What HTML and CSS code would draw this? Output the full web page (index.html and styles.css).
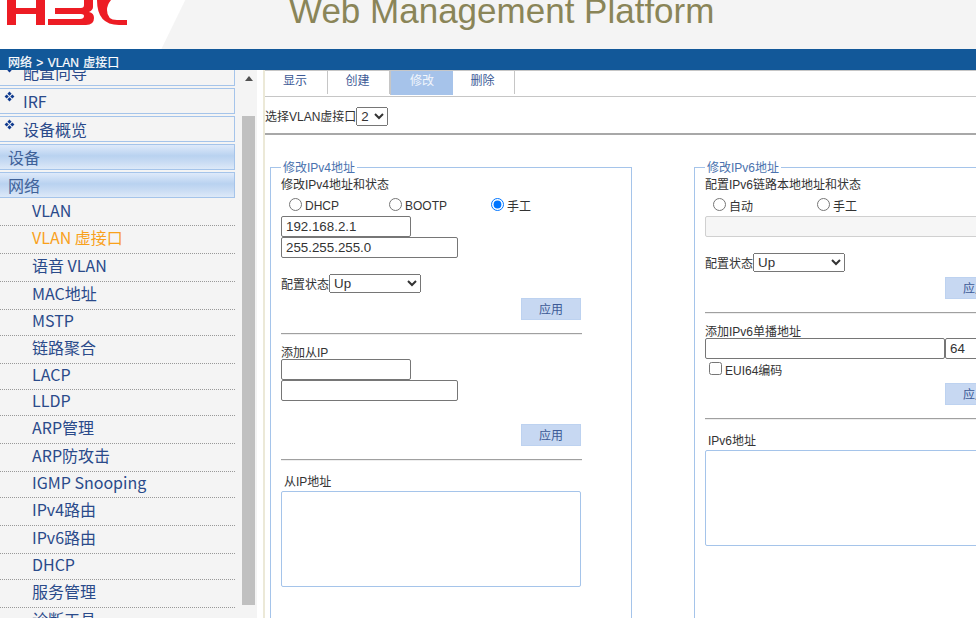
FILE: index.html
```html
<!DOCTYPE html>
<html lang="zh">
<head>
<meta charset="utf-8">
<title>Web Management Platform</title>
<link rel="stylesheet" href="styles.css">
</head>
<body>
<div class="page">
  <header class="header">
    <svg class="logo" width="122" height="25" viewBox="0 0 122 25" aria-label="H3C">
      <g fill="#ed1c24">
        <path d="M0 0h9v8h20V0h9v25h-9V14H9v11H0z"/>
        <path d="M41 25v-6h32q4 0 4-3q0-2-3-2H48V8h26q3 0 3-3V0h9v7q0 3-4 5q5 1 5 6q0 7-8 7z"/>
        <path d="M90 0q0 25 22 25h8v-5h-10q-10 0-10-10q0-5 4-10z"/>
      </g>
    </svg>
    <div class="title">Web Management Platform</div>
  </header>
  <div class="crumb">网络 &gt; VLAN 虚接口</div>
  <div class="main">
    <aside class="side">
      <nav class="menu">
        <div class="box first"><span class="dia"></span>配置向导</div>
        <div class="box"><span class="dia"></span>IRF</div>
        <div class="box"><span class="dia"></span>设备概览</div>
        <div class="head">设备</div>
        <div class="head">网络</div>
        <div class="row">VLAN</div>
        <div class="row tall cur">VLAN 虚接口</div>
        <div class="row tall">语音 VLAN</div>
        <div class="row tall">MAC地址</div>
        <div class="row">MSTP</div>
        <div class="row tall">链路聚合</div>
        <div class="row">LACP</div>
        <div class="row">LLDP</div>
        <div class="row tall">ARP管理</div>
        <div class="row tall">ARP防攻击</div>
        <div class="row">IGMP Snooping</div>
        <div class="row tall">IPv4路由</div>
        <div class="row tall">IPv6路由</div>
        <div class="row">DHCP</div>
        <div class="row tall">服务管理</div>
        <div class="row tall">诊断工具</div>
      </nav>
      <div class="track"><span class="arrow"></span><span class="thumb"></span></div>
    </aside>
    <main class="content">
      <div class="tabs">
        <a class="tab">显示</a>
        <a class="tab">创建</a>
        <a class="tab on">修改</a>
        <a class="tab">删除</a>
      </div>
      <div class="pick"><span class="pick-text">选择VLAN虚接口</span><select class="sel-small"><option>2</option></select></div>
      <div class="panes">
        <fieldset class="pane">
          <legend>修改IPv4地址</legend>
          <div class="lab">修改IPv4地址和状态</div>
          <div class="opts">
            <label class="opt"><input type="radio" name="v4">DHCP</label>
            <label class="opt"><input type="radio" name="v4">BOOTP</label>
            <label class="opt"><input type="radio" name="v4" checked>手工</label>
          </div>
          <input class="ip" type="text" value="192.168.2.1">
          <input class="mask" type="text" value="255.255.255.0">
          <div class="state">配置状态<select class="sel"><option>Up</option></select></div>
          <button class="apply">应用</button>
          <div class="rule"></div>
          <div class="lab sub">添加从IP</div>
          <input class="ip" type="text">
          <input class="mask" type="text">
          <button class="apply far">应用</button>
          <div class="rule"></div>
          <div class="lab list-lab">从IP地址</div>
          <div class="list"></div>
        </fieldset>
        <fieldset class="pane">
          <legend>修改IPv6地址</legend>
          <div class="lab">配置IPv6链路本地地址和状态</div>
          <div class="opts wide">
            <label class="opt"><input type="radio" name="v6">自动</label>
            <label class="opt"><input type="radio" name="v6">手工</label>
          </div>
          <input class="off" type="text" disabled>
          <div class="state">配置状态<select class="sel"><option>Up</option></select></div>
          <button class="apply">应用</button>
          <div class="rule"></div>
          <div class="lab sub">添加IPv6单播地址</div>
          <div class="addr"><input class="v6" type="text"><input class="len" type="text" value="64"></div>
          <label class="eui"><input type="checkbox">EUI64编码</label>
          <button class="apply near">应用</button>
          <div class="rule"></div>
          <div class="lab list-lab">IPv6地址</div>
          <div class="list"></div>
        </fieldset>
      </div>
    </main>
  </div>
</div>
</body>
</html>
```
FILE: styles.css
```css
* { box-sizing: border-box; }
html, body { margin: 0; height: 100%; }
body { background: #fff; overflow: hidden; font: 12px "Liberation Sans", "Noto Sans CJK SC", sans-serif; color: #333; }
.page { width: 976px; height: 618px; overflow: hidden; display: flex; flex-direction: column; }

.header { height: 49px; flex: none; display: flex; background: linear-gradient(116deg, #fff 0, #fff 166px, #f4f4f4 167px); overflow: hidden; }
.logo { flex: none; margin-left: 7px; }
.title { margin-left: 160px; margin-top: -11px; font: 35px/44px "Liberation Sans", sans-serif; color: #8a8558; white-space: nowrap; }

.crumb { height: 21px; flex: none; background: #125899; color: #fff; padding: 6px 0 0 8px; line-height: 16px; font-size: 12px; word-spacing: 1px; -webkit-text-stroke: 0.2px #fff; }

.main { flex: 1; min-height: 0; display: flex; }
.side { width: 257px; flex: none; background: #f4f4f4; display: flex; overflow: hidden; }
.menu { width: 235px; flex: none; margin-top: -10px; font: 16px "Noto Sans CJK SC", sans-serif; color: #2a4a8a; }
.box, .head { height: 26px; margin-bottom: 2px; border: 1px solid #a5c4ea; border-width: 1px 1px 1px 0; }
.box { position: relative; padding-left: 23px; line-height: 24px; background: #f4f4f4; }
.box.first { border-top: 0; }
.dia { position: absolute; left: 5.5px; top: 3.5px; width: 7px; height: 7px; transform: rotate(45deg); background:
  linear-gradient(#0f3a8f, #0f3a8f) 0 0/3px 3px no-repeat,
  linear-gradient(#0f3a8f, #0f3a8f) 4px 0/3px 3px no-repeat,
  linear-gradient(#0f3a8f, #0f3a8f) 0 4px/3px 3px no-repeat,
  linear-gradient(#0f3a8f, #0f3a8f) 4px 4px/3px 3px no-repeat; }
.head { padding-left: 8px; line-height: 24px; color: #3f6299; background: linear-gradient(#dfeafa, #b9d2f0 45%, #c8dbf3 70%, #dde9f8); }
.row { height: 26px; padding-left: 32px; line-height: 21px; border-bottom: 1px dotted #999; white-space: nowrap; }
.row.tall { height: 28px; line-height: 23px; }
.row.cur { color: #f9a11b; }
.track { width: 22px; flex: none; padding: 0 2px 0 7px; display: flex; flex-direction: column; align-items: stretch; }
.arrow { align-self: center; margin-top: 6px; border: 4px solid transparent; border-top: 0; border-bottom: 5px solid #505050; width: 0; height: 5px; }
.thumb { margin-top: 35px; height: 489px; background: #c0c0c0; }

.content { flex: 1; min-width: 0; margin-left: 6px; border-left: 2px solid #ece9d8; overflow: hidden; }
.tabs { height: 27px; display: flex; border-bottom: 1px solid #c6c6c6; border-top: 1px solid #c6c6c6; color: #3c5a96; }
.tab { width: 62px; height: 23px; padding-right: 2px; line-height: 20px; text-align: center; border-right: 1px solid #c6c6c6; }
.tab:first-child { width: 63px; }
.tab.on { width: 63px; height: 24px; padding-right: 0; background: #a6c3ea; color: #f2f6fc; border-right: 0; border-left: 1px solid #c6c6c6; }
.pick { height: 38px; display: flex; align-items: center; border-bottom: 2px solid #a8a8a8; padding-top: 2px; }
.pick-text { margin-top: -2px; }
.sel-small { width: 32px; height: 19px; font: 13.33px "Liberation Sans", sans-serif; color: #333; padding: 0; margin: 0; }

.panes { display: flex; gap: 62px; padding: 24px 0 0 5px; }
.pane { flex: none; width: 362px; height: 600px; margin: 0; padding: 0 0 0 10px; border: 1px solid #a5c4ea; }
.pane legend { margin-left: 0; padding: 2px 2px 0; line-height: 14px; color: #4a72ae; }
.lab { height: 14px; line-height: 16px; margin-top: 2px; }
.opts { height: 21px; margin-top: 4px; display: flex; padding-left: 8px; }
.opt { width: 100px; display: flex; align-items: center; gap: 3px; }
.opt:nth-child(2) { width: 102px; }
.opts.wide .opt { width: 104px; }
.opt input { margin: 0; width: 13px; height: 13px; position: relative; top: -1px; }
.ip, .mask, .off, .v6, .len { display: block; height: 21px; padding: 1px 4px; margin: 0; font: 13.33px "Liberation Sans", sans-serif; border: 1px solid #767676; border-radius: 2px; color: #333; }
.ip { width: 130px; }
.mask { width: 177px; }
.off { width: 320px; background: #f6f6f6; border-color: #d0d0d0; }
.state { margin-top: 16px; height: 19px; display: flex; align-items: center; }
.sel { width: 92px; height: 19px; padding: 0; margin: 0; font: 13.33px "Liberation Sans", sans-serif; color: #333; }
.apply { display: block; width: 60px; height: 22px; margin: 5px 0 0 240px; padding: 0 0 2px; border: 1px solid #bdd2f0; background: #c7d8f2; color: #3c5a96; font: 12px "Liberation Sans", "Noto Sans CJK SC", sans-serif; }
.apply.far { margin-top: 23px; }
.apply.near { margin-top: 5px; }
.rule { width: 301px; height: 2px; margin-top: 13px; border-top: 1px solid #a0a0a0; border-bottom: 1px solid #eee; }
.sub { margin-top: 10px; }
.list-lab { margin-top: 13px; padding-left: 3px; }
.list { width: 300px; height: 96px; margin-top: 3px; border: 1px solid #a5c4ea; border-radius: 2px; background: #fff; }
.addr { display: flex; }
.v6 { width: 240px; }
.len { width: 60px; }
.eui { height: 19px; display: flex; align-items: center; padding: 2px 0 0 4px; gap: 3px; }
.eui input { margin: 0; width: 13px; height: 13px; position: relative; top: -1px; }
```
